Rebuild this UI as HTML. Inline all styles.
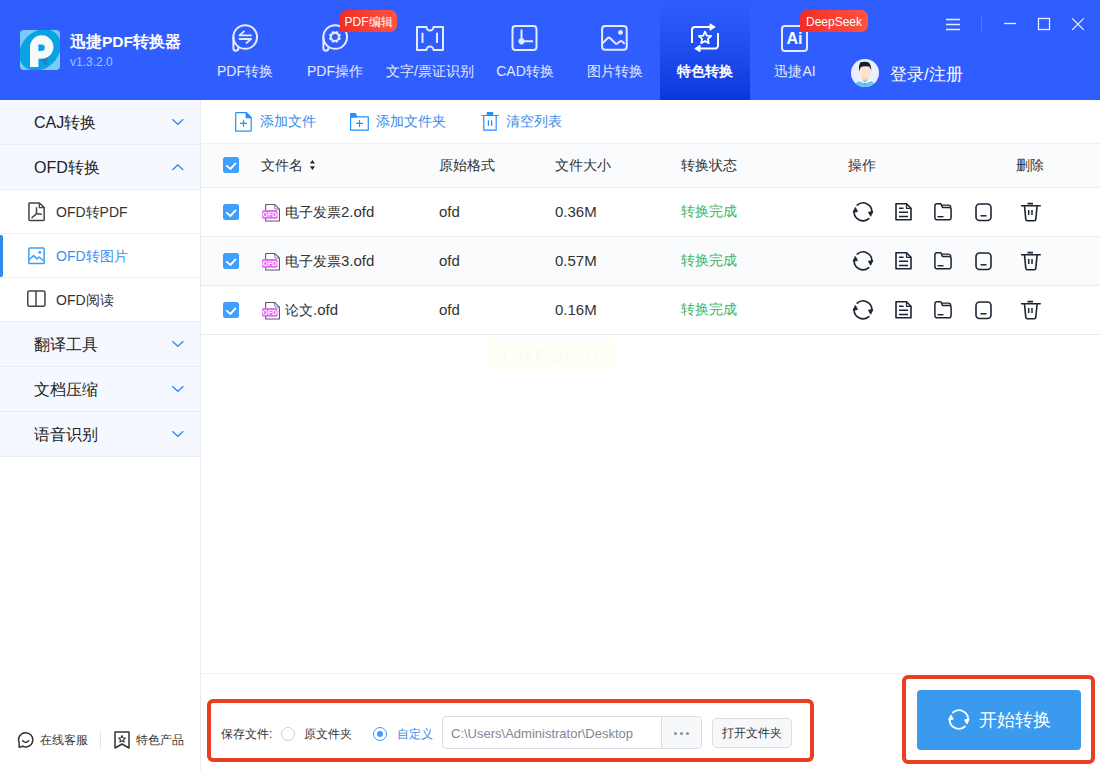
<!DOCTYPE html>
<html><head><meta charset="utf-8">
<style>
*{margin:0;padding:0;box-sizing:border-box}
html,body{width:1100px;height:770px;overflow:hidden;background:#fff;font-family:"Liberation Sans",sans-serif;color:#333}
.abs{position:absolute}
#hdr{position:absolute;left:0;top:0;width:1100px;height:100px;background:#305EFE}
.logo{left:20px;top:30px;width:40px;height:40px;border-radius:5px;background:linear-gradient(135deg,#5EC8F5,#2FA6E8)}
.title{left:70px;top:32px;font-size:15.5px;font-weight:bold;color:#fff;letter-spacing:0px}
.ver{left:70px;top:54.5px;font-size:12px;color:#A6BEFF}
.nav{position:absolute;top:0;height:100px;text-align:center;color:#E4E9FF;font-size:14px}
.nav .lbl{position:absolute;left:0;right:0;top:63px;white-space:nowrap}
.nav svg{position:absolute;top:20px;left:50%;margin-left:-16px}
.nav.act{background:linear-gradient(#305EFE 0%,#2A57F7 20%,#2350F0 40%,#1A47E8 65%,#0B36DD 100%);color:#fff;font-weight:bold}
.badge{position:absolute;height:22px;line-height:24px;font-size:12px;color:#fff;text-align:center;border-radius:7px 7px 7px 0;background:linear-gradient(90deg,#F02D25,#FF5343)}
#side{position:absolute;left:0;top:100px;width:201px;height:670px;border-right:1px solid #E8EBF0;background:#fff}
.grp{position:relative;height:45px;background:#F5F9FF;border-bottom:1px solid #E9ECF1;font-size:16px;color:#222;line-height:46px;padding-left:34px}
.chev{position:absolute;right:15px;top:17px}
.sub{position:relative;height:44px;background:#fff;border-bottom:1px solid #EEF0F4;font-size:14px;color:#333;line-height:44px;padding-left:56px}
.sub svg{position:absolute;left:27px;top:12px}
.sub.on{color:#3D8EF0}
.sub.on:before{content:"";position:absolute;left:0;top:1px;bottom:0;width:3px;background:#2E8BF0;border-radius:0 2px 2px 0}

#main{position:absolute;left:201px;top:100px;width:899px;height:670px;background:#fff}
.tb{position:absolute;font-size:14px;color:#3A8CEE;top:13px;white-space:nowrap}
.tb svg{position:absolute;left:0}
.row{position:absolute;left:0;width:899px;border-bottom:1px solid #E8EAF0}
.cell{position:absolute;font-size:14px;color:#333;white-space:nowrap}
.ck{position:absolute;left:22px;width:16px;height:16px;background:#409EFF;border-radius:2.5px}
.ck svg{position:absolute;left:0;top:0}
.ops svg{position:absolute}
</style></head><body>
<div id="hdr">
  
  <div class="abs" style="left:20px;top:30px;width:40px;height:40px">
    <svg width="40" height="40" viewBox="20 30 40 40">
      <defs><clipPath id="lc"><rect x="20" y="30" width="40" height="40" rx="4"/></clipPath></defs>
      <g clip-path="url(#lc)">
      <rect x="20" y="30" width="40" height="40" fill="#7DCBF4"/>
      <ellipse cx="40" cy="50" rx="23" ry="18.4" transform="rotate(-45 40 50)" fill="#09A3E4"/>
      <path d="M48 57 L38.4 58 L47 67 Z" fill="#1C86CC"/>
      <path d="M30 67 V47 A11.7 11.7 0 1 1 41.7 58.7 H38.4 V67 Z" fill="#F7F9FB"/>
      <path d="M38.4 44.4 H41.5 A3.3 3.3 0 0 1 41.5 51 H38.4 Z" fill="#09A3E4"/>
      </g>
    </svg>
  </div>
  <div class="nav" style="left:200px;width:90px">
    <svg width="32" height="32" viewBox="0 0 32 32" fill="none" stroke="#E6EAFF" stroke-width="2"><circle cx="16.2" cy="17" r="11.85"/><path d="M4.4 17 V28.2 A2.5 2.5 0 0 0 9.4 28.2 V26.5" stroke-linejoin="round"/><path d="M10.5 15.4h11.5M10.5 15.4l4.5-4M22 19h-11.5M22 19l-4.5 4" stroke-linecap="round" stroke-linejoin="round" stroke-width="1.8"/></svg>
    <div class="lbl">PDF转换</div>
  </div>
  <div class="nav" style="left:290px;width:90px">
    <svg width="32" height="32" viewBox="0 0 32 32" fill="none" stroke="#E6EAFF" stroke-width="2"><circle cx="16.2" cy="17" r="11.85"/><path d="M4.4 17 V28.2 A2.5 2.5 0 0 0 9.4 28.2 V26.5" stroke-linejoin="round"/><g transform="translate(15.9 16.9)"><path fill="#E6EAFF" stroke="none" fill-rule="evenodd" d="M4.59 -0.28 L5.93 1.41 L5.20 3.20 L3.05 3.45 L3.45 3.05 L3.20 5.20 L1.41 5.93 L-0.28 4.59 L0.28 4.59 L-1.41 5.93 L-3.20 5.20 L-3.45 3.05 L-3.05 3.45 L-5.20 3.20 L-5.93 1.41 L-4.59 -0.28 L-4.59 0.28 L-5.93 -1.41 L-5.20 -3.20 L-3.05 -3.45 L-3.45 -3.05 L-3.20 -5.20 L-1.41 -5.93 L0.28 -4.59 L-0.28 -4.59 L1.41 -5.93 L3.20 -5.20 L3.45 -3.05 L3.05 -3.45 L5.20 -3.20 L5.93 -1.41 L4.59 0.28Z M3 0 A3 3 0 1 0 -3 0 A3 3 0 1 0 3 0Z"/></g></svg>
    <div class="lbl">PDF操作</div>
  </div>
  <div class="nav" style="left:380px;width:100px">
    <svg width="32" height="32" viewBox="0 0 32 32" fill="none" stroke="#E6EAFF" stroke-width="2"><path d="M3 7h9.5a3.5 3.5 0 0 0 7 0H29v23H19.5a3.5 3.5 0 0 0-7 0H3Z" stroke-linejoin="round"/><path d="M8.5 12.7v10.3M23 12.7v10.3"/></svg>
    <div class="lbl">文字/票证识别</div>
  </div>
  <div class="nav" style="left:480px;width:90px">
    <svg width="32" height="32" viewBox="0 0 32 32" fill="none" stroke="#E6EAFF" stroke-width="2"><rect x="3.5" y="6" width="24" height="24" rx="3"/><path d="M12.5 9.5v15M12.5 21.2h11.5" /><circle cx="12.5" cy="21.2" r="3" fill="#E6EAFF" stroke="none"/></svg>
    <div class="lbl">CAD转换</div>
  </div>
  <div class="nav" style="left:570px;width:90px">
    <svg width="32" height="32" viewBox="0 0 32 32" fill="none" stroke="#E6EAFF" stroke-width="2"><rect x="3.1" y="5.9" width="24.6" height="23.9" rx="3"/><circle cx="21.5" cy="12.4" r="2.4" fill="#E6EAFF" stroke="none"/><path d="M4 22.9 L8.6 18.2 Q9.9 17 11.2 18.2 L16.3 23.2 Q17.6 24.4 18.9 23.1 L20.8 21.4 Q22 20.4 23.2 21.5 L25 23.2" stroke-linejoin="round" stroke-linecap="round"/></svg>
    <div class="lbl">图片转换</div>
  </div>
  <div class="nav act" style="left:660px;width:90px">
    <svg width="32" height="32" viewBox="0 0 32 32" fill="none" stroke="#fff" stroke-width="2"><path d="M3 23V10a3 3 0 0 1 3-3H22"/><path d="M21 3.8l5.2 3.2-5.2 3.2Z" fill="#fff" stroke-linejoin="round" stroke-width="1"/><path d="M29 13v12.6a3 3 0 0 1-3 3H10"/><path d="M11 25.4l-5.2 3.2 5.2 3.2Z" fill="#fff" stroke-linejoin="round" stroke-width="1"/><path d="M16.00 11.60 L17.76 15.57 L22.09 16.02 L18.85 18.93 L19.76 23.18 L16.00 21.00 L12.24 23.18 L13.15 18.93 L9.91 16.02 L14.24 15.57Z" stroke-width="1.8" stroke-linejoin="round"/></svg>
    <div class="lbl">特色转换</div>
  </div>
  <div class="nav" style="left:750px;width:90px">
    <svg width="32" height="32" viewBox="0 0 32 32" fill="none" stroke="#E6EAFF" stroke-width="2"><rect x="3" y="6" width="25" height="25" rx="3"/><text x="15.5" y="24.3" font-family="Liberation Sans" font-weight="bold" font-size="16" fill="#fff" stroke="none" text-anchor="middle">Ai</text></svg>
    <div class="lbl">迅捷AI</div>
  </div>
  <div class="badge" style="left:340px;top:10px;width:57px">PDF编辑</div>
  <div class="badge" style="left:800px;top:10px;width:68px">DeepSeek</div>
  <svg class="abs" style="left:940px;top:14px" width="150" height="20" viewBox="0 0 150 20" fill="none" stroke="#E8ECFF" stroke-width="1.3">
    <path d="M6 5.5h14M6 10.5h14M6 15.5h14"/>
    <path d="M41.5 2v16" stroke="#5A7BFF" stroke-width="0.8"/>
    <path d="M64 9.5h12"/>
    <rect x="98.5" y="4.5" width="11" height="11"/>
    <path d="M132.2 4.4l11.5 11.5M143.7 4.4l-11.5 11.5"/>
  </svg>
  <div class="abs" style="left:851px;top:59px;width:28px;height:28px;border-radius:50%;background:#EAF0FB;overflow:hidden">
    <svg width="28" height="28" viewBox="0 0 28 28"><path d="M2 28 Q4.5 21.3 14 21 Q23.5 21.3 26 28Z" fill="#6CC1F0"/><path d="M10.8 15h6.5v6.5h-6.5Z" fill="#FBD5B2"/><path d="M9 20.3 L14 23.4 L19 20.3 L20 22 L14 24.5 L8 22Z" fill="#fff"/><path d="M13 24h2l-.3 1.3h-1.4Z" fill="#2D9BE0"/><ellipse cx="14.1" cy="12" rx="5.8" ry="6.3" fill="#FDE3CB"/><path d="M8.2 12.5 Q7.3 6.5 9.5 3.3 Q13 2.2 16.5 3 Q20.5 4.2 20.2 12.5 Q19.8 8.4 17.5 7.6 Q13 6.8 10 8 Q8.7 9 8.2 12.5Z" fill="#15202E"/></svg>
  </div>
  <div class="abs" style="left:890px;top:64px;font-size:16.5px;color:#fff">登录/注册</div>

  <div class="abs title">迅捷PDF转换器</div>
  <div class="abs ver">v1.3.2.0</div>
</div>
<div id="side">
  <div class="grp">CAJ转换<svg class="chev" width="14" height="10" viewBox="0 0 14 10" fill="none" stroke="#2B8BF8" stroke-width="1.3"><path d="M1.3 2.3l5.5 5 5.5-5"/></svg></div>
  <div class="grp">OFD转换<svg class="chev" width="14" height="10" viewBox="0 0 14 10" fill="none" stroke="#2B8BF8" stroke-width="1.3"><path d="M1.3 8l5.5-5 5.5 5"/></svg></div>
  <div class="sub"><svg width="20" height="20" viewBox="0 0 20 20" fill="none" stroke="#444" stroke-width="1.5"><path d="M1.95 1.7a.8.8 0 0 1 .8-.75h9.6l4.8 4.7v12.1a.8.8 0 0 1-.8.8H2.75a.8.8 0 0 1-.8-.8Z" stroke-linejoin="round"/><path d="M12.3 .95v4.7h4.85" stroke-linejoin="round" stroke-width="1.3"/><path d="M9.5 5.8V11.6L14.2 12.3M9.5 11.6L5 15.8" stroke-width="1.5" stroke-linecap="round" stroke-linejoin="round"/></svg>OFD转PDF</div>
  <div class="sub on"><svg width="20" height="20" viewBox="0 0 20 20" fill="none" stroke="#3D9DF5" stroke-width="1.5"><rect x="1.85" y="2" width="15.3" height="15.5" rx=".8"/><circle cx="12.8" cy="6.3" r="1.4" fill="#3D9DF5" stroke="none"/><path d="M2.3 13.8l4.3-4.3 3.5 3.5 2-2 4.8 4" stroke-linejoin="round"/></svg>OFD转图片</div>
  <div class="sub"><svg width="20" height="20" viewBox="0 0 20 20" fill="none" stroke="#444" stroke-width="1.5"><rect x="0.75" y="1.05" width="17.2" height="15.3" rx="1.5"/><path d="M9 1.05v15.3"/></svg>OFD阅读</div>
  <div class="grp">翻译工具<svg class="chev" width="14" height="10" viewBox="0 0 14 10" fill="none" stroke="#2B8BF8" stroke-width="1.3"><path d="M1.3 2.3l5.5 5 5.5-5"/></svg></div>
  <div class="grp">文档压缩<svg class="chev" width="14" height="10" viewBox="0 0 14 10" fill="none" stroke="#2B8BF8" stroke-width="1.3"><path d="M1.3 2.3l5.5 5 5.5-5"/></svg></div>
  <div class="grp">语音识别<svg class="chev" width="14" height="10" viewBox="0 0 14 10" fill="none" stroke="#2B8BF8" stroke-width="1.3"><path d="M1.3 2.3l5.5 5 5.5-5"/></svg></div>
  <div class="abs" style="left:17px;top:631px;font-size:12px;color:#333;white-space:nowrap">
    <svg class="abs" style="left:0;top:0" width="18" height="18" viewBox="0 0 18 18" fill="none" stroke="#333" stroke-width="1.5"><path d="M5.7 15.23A7.1 7.1 0 1 0 2.03 11.23L2.2 16.2Z" stroke-linejoin="round"/><path d="M5.6 9.8Q8.7 13 11.8 9.8" stroke-linecap="round"/></svg>
    <span class="abs" style="left:23px;top:1px">在线客服</span>
    <div class="abs" style="left:83px;top:0;width:1px;height:18px;background:#E3E6EB"></div>
    <svg class="abs" style="left:96px;top:-1px" width="18" height="20" viewBox="0 0 18 20" fill="none" stroke="#333" stroke-width="1.5"><path d="M2 2h14v16l-7-4-7 4Z" stroke-linejoin="round"/><path d="M9 5.5l1 2.2 2.4.3-1.8 1.6.5 2.4L9 10.8 6.9 12l.5-2.4-1.8-1.6 2.4-.3Z" stroke-width="1.1" stroke-linejoin="round"/></svg>
    <span class="abs" style="left:119px;top:1px">特色产品</span>
  </div>
</div>
<div id="main">
  <div class="tb" style="left:33px"><svg style="top:-1px" width="18" height="20" viewBox="0 0 18 20" fill="none" stroke="#2290FF" stroke-width="1.2"><path d="M1.7 1.3a.7.7 0 0 1 .7-.7h9.8l5 5v12.9a.7.7 0 0 1-.7.7H2.4a.7.7 0 0 1-.7-.7Z" stroke-linejoin="round"/><path d="M12.2 .6v5h5Z" fill="#2290FF" stroke-linejoin="round"/><path d="M6 11.3h7M9.5 7.8v7"/></svg><span style="position:absolute;left:26px">添加文件</span></div>
  <div class="tb" style="left:148px"><svg style="top:-1px" width="21" height="20" viewBox="0 0 21 20" fill="none" stroke="#2290FF" stroke-width="1.2"><path d="M1.6 4.9h17.7v13.2H1.6Z" stroke-linejoin="round"/><path d="M1.6 1.6h4.7l1.6 3.3H1.6Z" fill="#2290FF" stroke-linejoin="round"/><path d="M7 11.4h7M10.5 7.9v7"/></svg><span style="position:absolute;left:27px">添加文件夹</span></div>
  <div class="tb" style="left:280px"><svg style="top:-1px" width="19" height="20" viewBox="0 0 19 20" fill="none" stroke="#2290FF" stroke-width="1.2"><path d="M.6 3.5h17.2M2.8 3.5v14.6h12.4V3.5"/><path d="M6.3 .6h5.3v2.9H6.3Z" fill="#2290FF" stroke-linejoin="round"/><path d="M7.4 8.2v5.7M10.6 8.2v5.7"/></svg><span style="position:absolute;left:25px">清空列表</span></div>
  <div class="row" style="top:43px;height:45px;background:#FAFBFC;border-top:1px solid #EEF0F3">
    <div class="ck" style="top:13px"><svg width="16" height="16" viewBox="0 0 16 16"><path d="M3.2 8.4L7.4 12L13 5.8" fill="none" stroke="#fff" stroke-width="1.9"/></svg></div>
    <div class="cell" style="left:60px;top:13px">文件名</div>
    <svg style="position:absolute;left:108px;top:15px" width="7" height="12" viewBox="0 0 7 12"><path d="M3.4 .9L5.9 4.6H.9Z M3.4 10.9L5.9 7.3H.9Z" fill="#222"/></svg>
    <div class="cell" style="left:238px;top:13px">原始格式</div>
    <div class="cell" style="left:354px;top:13px">文件大小</div>
    <div class="cell" style="left:480px;top:13px">转换状态</div>
    <div class="cell" style="left:647px;top:13px">操作</div>
    <div class="cell" style="left:815px;top:13px">删除</div>
  </div>
<div class="row" style="top:88px;height:49px;background:#fff">
  <div class="ck" style="top:16px"><svg width="16" height="16" viewBox="0 0 16 16"><path d="M3.2 8.4L7.4 12L13 5.8" fill="none" stroke="#fff" stroke-width="1.9"/></svg></div>
  <svg style="position:absolute;left:61px;top:15px" width="20" height="20" viewBox="0 0 20 20"><path d="M3.65 1.55h9.1l4.7 4.5V18.05H3.65Z" fill="#fff" stroke="#4F5B78" stroke-width="1.1" stroke-linejoin="round"/><path d="M12.75 1.55v3a1.5 1.5 0 0 0 1.5 1.5h3.2" fill="none" stroke="#6A7590" stroke-width="1"/><rect x="0.1" y="7" width="15.4" height="8.75" rx="1.5" fill="#E96CF0"/><text x="7.8" y="13.9" font-family="Liberation Sans" font-size="6.8" font-weight="bold" fill="#fff" text-anchor="middle">OFD</text></svg>
  <div class="cell" style="left:84px;top:15px">电子发票<span style="font-size:15px">2.ofd</span></div>
  <div class="cell" style="left:238px;top:15px"><span style="font-size:15px">ofd</span></div>
  <div class="cell" style="left:354px;top:15px"><span style="font-size:15px">0.36M</span></div>
  <div class="cell" style="left:480px;top:15px;color:#3DB46B">转换完成</div>
  <div class="ops" style="position:absolute;left:0;top:13px"><svg style="left:651px" width="22" height="22" viewBox="0 0 22 22" fill="none" stroke="#1E2332" stroke-width="1.6"><path d="M5.23 4.14A8.8 8.8 0 0 1 19.8 11.6M16.77 17.56A8.8 8.8 0 0 1 2.2 10.1" stroke-linecap="round"/><path d="M16.4 11.2L20.9 10.4L18.7 15.3Z M5.6 10.5L1.1 11.3L3.3 6.4Z" fill="#1E2332" stroke-width="0.8" stroke-linejoin="round"/></svg>
<svg style="left:693px" width="20" height="22" viewBox="0 0 20 22" fill="none" stroke="#1E2332" stroke-width="1.6"><path d="M2 2.8h10.5l4.5 4.5v11.4H2Z" stroke-linejoin="round"/><path d="M12.5 2.8v4.5H17" stroke-linejoin="round" stroke-width="1.2"/><path d="M5 7.3h4.5M5 11.3h9M5 15.5h9" stroke-width="1.5"/></svg>
<svg style="left:732px" width="20" height="22" viewBox="0 0 20 22" fill="none" stroke="#1E2332" stroke-width="1.6"><path d="M1.9 5a2.2 2.2 0 0 1 2.2-2.2h3.8l1.6 3.7h6.6a2 2 0 0 1 2 2v8.1a2.2 2.2 0 0 1-2.2 2.2H4.1a2.2 2.2 0 0 1-2.2-2.2Z" stroke-linejoin="round" stroke-width="1.5"/><path d="M8.7 4.1h6.6a2.6 2.6 0 0 1 2.6 2.4" stroke-width="1.3"/><path d="M4.6 15.7h5.9" stroke-width="1.4"/></svg>
<svg style="left:773px" width="20" height="22" viewBox="0 0 20 22" fill="none" stroke="#1E2332" stroke-width="1.6"><rect x="2" y="3" width="15" height="16.5" rx="3.5"/><path d="M6.5 14.8h6" stroke-width="1.5"/></svg>
<svg style="left:819px" width="22" height="22" viewBox="0 0 22 22" fill="none" stroke="#1E2332" stroke-width="1.6"><path d="M7.5 2.6h5.5M1 4.8h19.8" /><path d="M4.5 5l1.3 13.3a1.6 1.6 0 0 0 1.6 1.5h6.8a1.6 1.6 0 0 0 1.6-1.5L17.1 5" stroke-linejoin="round"/><path d="M8.7 9v5M12 9v5" stroke-width="1.5"/></svg></div>
</div><div class="row" style="top:137px;height:49px;background:#FAFBFC">
  <div class="ck" style="top:16px"><svg width="16" height="16" viewBox="0 0 16 16"><path d="M3.2 8.4L7.4 12L13 5.8" fill="none" stroke="#fff" stroke-width="1.9"/></svg></div>
  <svg style="position:absolute;left:61px;top:15px" width="20" height="20" viewBox="0 0 20 20"><path d="M3.65 1.55h9.1l4.7 4.5V18.05H3.65Z" fill="#fff" stroke="#4F5B78" stroke-width="1.1" stroke-linejoin="round"/><path d="M12.75 1.55v3a1.5 1.5 0 0 0 1.5 1.5h3.2" fill="none" stroke="#6A7590" stroke-width="1"/><rect x="0.1" y="7" width="15.4" height="8.75" rx="1.5" fill="#E96CF0"/><text x="7.8" y="13.9" font-family="Liberation Sans" font-size="6.8" font-weight="bold" fill="#fff" text-anchor="middle">OFD</text></svg>
  <div class="cell" style="left:84px;top:15px">电子发票<span style="font-size:15px">3.ofd</span></div>
  <div class="cell" style="left:238px;top:15px"><span style="font-size:15px">ofd</span></div>
  <div class="cell" style="left:354px;top:15px"><span style="font-size:15px">0.57M</span></div>
  <div class="cell" style="left:480px;top:15px;color:#3DB46B">转换完成</div>
  <div class="ops" style="position:absolute;left:0;top:13px"><svg style="left:651px" width="22" height="22" viewBox="0 0 22 22" fill="none" stroke="#1E2332" stroke-width="1.6"><path d="M5.23 4.14A8.8 8.8 0 0 1 19.8 11.6M16.77 17.56A8.8 8.8 0 0 1 2.2 10.1" stroke-linecap="round"/><path d="M16.4 11.2L20.9 10.4L18.7 15.3Z M5.6 10.5L1.1 11.3L3.3 6.4Z" fill="#1E2332" stroke-width="0.8" stroke-linejoin="round"/></svg>
<svg style="left:693px" width="20" height="22" viewBox="0 0 20 22" fill="none" stroke="#1E2332" stroke-width="1.6"><path d="M2 2.8h10.5l4.5 4.5v11.4H2Z" stroke-linejoin="round"/><path d="M12.5 2.8v4.5H17" stroke-linejoin="round" stroke-width="1.2"/><path d="M5 7.3h4.5M5 11.3h9M5 15.5h9" stroke-width="1.5"/></svg>
<svg style="left:732px" width="20" height="22" viewBox="0 0 20 22" fill="none" stroke="#1E2332" stroke-width="1.6"><path d="M1.9 5a2.2 2.2 0 0 1 2.2-2.2h3.8l1.6 3.7h6.6a2 2 0 0 1 2 2v8.1a2.2 2.2 0 0 1-2.2 2.2H4.1a2.2 2.2 0 0 1-2.2-2.2Z" stroke-linejoin="round" stroke-width="1.5"/><path d="M8.7 4.1h6.6a2.6 2.6 0 0 1 2.6 2.4" stroke-width="1.3"/><path d="M4.6 15.7h5.9" stroke-width="1.4"/></svg>
<svg style="left:773px" width="20" height="22" viewBox="0 0 20 22" fill="none" stroke="#1E2332" stroke-width="1.6"><rect x="2" y="3" width="15" height="16.5" rx="3.5"/><path d="M6.5 14.8h6" stroke-width="1.5"/></svg>
<svg style="left:819px" width="22" height="22" viewBox="0 0 22 22" fill="none" stroke="#1E2332" stroke-width="1.6"><path d="M7.5 2.6h5.5M1 4.8h19.8" /><path d="M4.5 5l1.3 13.3a1.6 1.6 0 0 0 1.6 1.5h6.8a1.6 1.6 0 0 0 1.6-1.5L17.1 5" stroke-linejoin="round"/><path d="M8.7 9v5M12 9v5" stroke-width="1.5"/></svg></div>
</div><div class="row" style="top:186px;height:49px;background:#fff">
  <div class="ck" style="top:16px"><svg width="16" height="16" viewBox="0 0 16 16"><path d="M3.2 8.4L7.4 12L13 5.8" fill="none" stroke="#fff" stroke-width="1.9"/></svg></div>
  <svg style="position:absolute;left:61px;top:15px" width="20" height="20" viewBox="0 0 20 20"><path d="M3.65 1.55h9.1l4.7 4.5V18.05H3.65Z" fill="#fff" stroke="#4F5B78" stroke-width="1.1" stroke-linejoin="round"/><path d="M12.75 1.55v3a1.5 1.5 0 0 0 1.5 1.5h3.2" fill="none" stroke="#6A7590" stroke-width="1"/><rect x="0.1" y="7" width="15.4" height="8.75" rx="1.5" fill="#E96CF0"/><text x="7.8" y="13.9" font-family="Liberation Sans" font-size="6.8" font-weight="bold" fill="#fff" text-anchor="middle">OFD</text></svg>
  <div class="cell" style="left:84px;top:15px">论文<span style="font-size:15px">.ofd</span></div>
  <div class="cell" style="left:238px;top:15px"><span style="font-size:15px">ofd</span></div>
  <div class="cell" style="left:354px;top:15px"><span style="font-size:15px">0.16M</span></div>
  <div class="cell" style="left:480px;top:15px;color:#3DB46B">转换完成</div>
  <div class="ops" style="position:absolute;left:0;top:13px"><svg style="left:651px" width="22" height="22" viewBox="0 0 22 22" fill="none" stroke="#1E2332" stroke-width="1.6"><path d="M5.23 4.14A8.8 8.8 0 0 1 19.8 11.6M16.77 17.56A8.8 8.8 0 0 1 2.2 10.1" stroke-linecap="round"/><path d="M16.4 11.2L20.9 10.4L18.7 15.3Z M5.6 10.5L1.1 11.3L3.3 6.4Z" fill="#1E2332" stroke-width="0.8" stroke-linejoin="round"/></svg>
<svg style="left:693px" width="20" height="22" viewBox="0 0 20 22" fill="none" stroke="#1E2332" stroke-width="1.6"><path d="M2 2.8h10.5l4.5 4.5v11.4H2Z" stroke-linejoin="round"/><path d="M12.5 2.8v4.5H17" stroke-linejoin="round" stroke-width="1.2"/><path d="M5 7.3h4.5M5 11.3h9M5 15.5h9" stroke-width="1.5"/></svg>
<svg style="left:732px" width="20" height="22" viewBox="0 0 20 22" fill="none" stroke="#1E2332" stroke-width="1.6"><path d="M1.9 5a2.2 2.2 0 0 1 2.2-2.2h3.8l1.6 3.7h6.6a2 2 0 0 1 2 2v8.1a2.2 2.2 0 0 1-2.2 2.2H4.1a2.2 2.2 0 0 1-2.2-2.2Z" stroke-linejoin="round" stroke-width="1.5"/><path d="M8.7 4.1h6.6a2.6 2.6 0 0 1 2.6 2.4" stroke-width="1.3"/><path d="M4.6 15.7h5.9" stroke-width="1.4"/></svg>
<svg style="left:773px" width="20" height="22" viewBox="0 0 20 22" fill="none" stroke="#1E2332" stroke-width="1.6"><rect x="2" y="3" width="15" height="16.5" rx="3.5"/><path d="M6.5 14.8h6" stroke-width="1.5"/></svg>
<svg style="left:819px" width="22" height="22" viewBox="0 0 22 22" fill="none" stroke="#1E2332" stroke-width="1.6"><path d="M7.5 2.6h5.5M1 4.8h19.8" /><path d="M4.5 5l1.3 13.3a1.6 1.6 0 0 0 1.6 1.5h6.8a1.6 1.6 0 0 0 1.6-1.5L17.1 5" stroke-linejoin="round"/><path d="M8.7 9v5M12 9v5" stroke-width="1.5"/></svg></div>
</div>
  <div class="abs" style="left:286px;top:239px;width:128px;height:33px;background:#FFFEF7"><span style="position:absolute;left:12px;top:5px;font-family:'Liberation Serif',serif;font-size:20px;color:#FCFBF3">1760526593</span></div>
  <div class="abs" style="left:0;top:573px;width:899px;height:1px;background:#EEF0F3"></div>
</div>

<div class="abs" style="left:207px;top:699px;width:607px;height:63px;border:4px solid #E83E22;border-radius:6px"></div>
<div class="abs" style="left:221px;top:726px;font-size:12px;color:#333;white-space:nowrap">保存文件:</div>
<div class="abs" style="left:281px;top:727px;width:14px;height:14px;border:1px solid #CDD1D8;border-radius:50%;background:#fff"></div>
<div class="abs" style="left:304px;top:726px;font-size:12px;color:#333;white-space:nowrap">原文件夹</div>
<div class="abs" style="left:373px;top:727px;width:14px;height:14px;border:1px solid #3E9CF6;border-radius:50%;background:#fff"><div class="abs" style="left:3px;top:3px;width:6px;height:6px;border-radius:50%;background:#3E9CF6"></div></div>
<div class="abs" style="left:397px;top:726px;font-size:12px;color:#3A8CEE;white-space:nowrap">自定义</div>
<div class="abs" style="left:442px;top:716px;width:260px;height:33px;border:1px solid #D8DDE6;border-radius:4px;background:#fff;overflow:hidden">
  <div class="abs" style="left:8px;top:9px;font-size:13px;color:#7F8794;white-space:nowrap">C:\Users\Administrator\Desktop</div>
  <div class="abs" style="left:218px;top:0;width:41px;height:31px;border-left:1px solid #D8DDE6;background:#F7F8FA">
    <div class="abs" style="left:12px;top:15px;width:3px;height:3px;border-radius:50%;background:#8A8F99;box-shadow:6px 0 0 #8A8F99,12px 0 0 #8A8F99"></div>
  </div>
</div>
<div class="abs" style="left:712px;top:718px;width:80px;height:30px;border:1px solid #D8DDE6;border-radius:5px;background:#F7F8FA;font-size:12px;color:#333;text-align:center;line-height:28px">打开文件夹</div>
<div class="abs" style="left:902px;top:675px;width:193px;height:89px;border:4px solid #E83E22;border-radius:6px"></div>
<div class="abs" style="left:917px;top:690px;width:164px;height:60px;border-radius:4px;background:#399AF0">
  <svg class="abs" style="left:31px;top:19px;overflow:visible" width="22" height="22" viewBox="0 0 22 22" fill="none" stroke="#fff" stroke-width="2"><g transform="translate(10.9 10.5) scale(1.04) translate(-11 -10.85)"><path d="M5.23 4.14A8.8 8.8 0 0 1 19.8 11.6M16.77 17.56A8.8 8.8 0 0 1 2.2 10.1" stroke-linecap="round" stroke-width="1.8"/><path d="M16.4 11.2L20.9 10.4L18.7 15.3Z M5.6 10.5L1.1 11.3L3.3 6.4Z" fill="#fff" stroke-width="0.8" stroke-linejoin="round"/></g></svg>
  <div class="abs" style="left:62px;top:18px;font-size:18px;color:#fff;white-space:nowrap">开始转换</div>
</div>
</body></html>
